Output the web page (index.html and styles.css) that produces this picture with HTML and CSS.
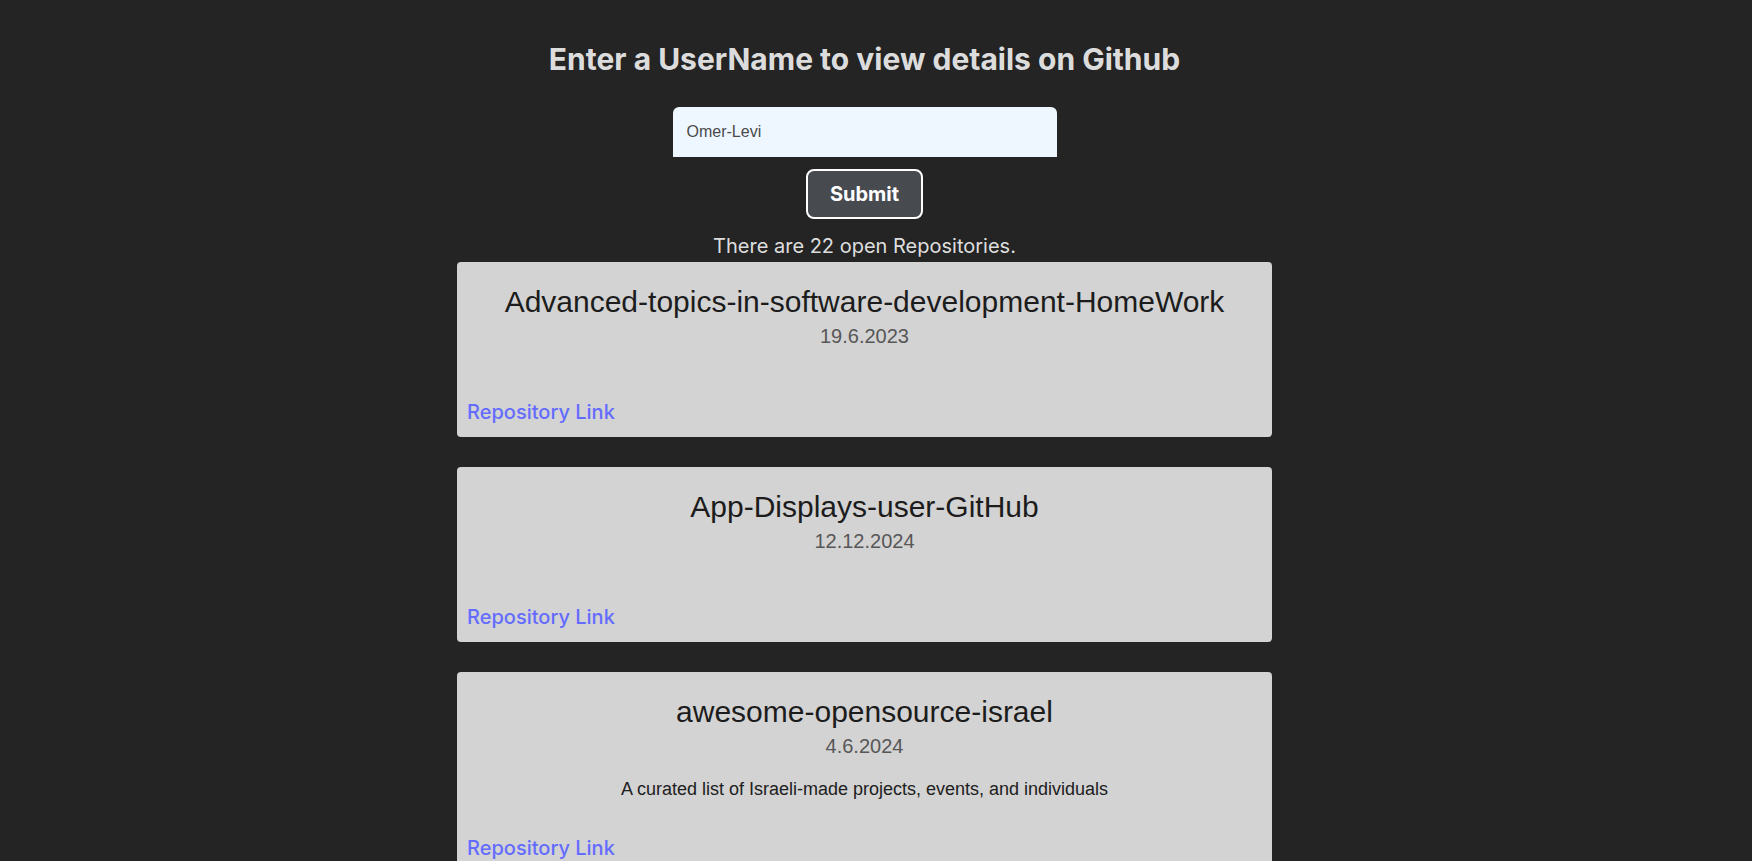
FILE: index.html
```html
<!DOCTYPE html>
<html lang="en">
<head>
<meta charset="utf-8">
<title>Github User Details</title>
<link rel="stylesheet" href="styles.css">
</head>
<body>
<div class="app">
  <h1 class="title">Enter a UserName to view details on Github</h1>
  <form class="search">
    <input class="search-input" type="text" value="Omer-Levi">
    <button class="search-btn" type="button">Submit</button>
  </form>
  <p class="count">There are 22 open Repositories.</p>
  <div class="repo-list">
    <div class="repo-card">
      <h2 class="repo-name">Advanced-topics-in-software-development-HomeWork</h2>
      <p class="repo-date">19.6.2023</p>
      <p class="repo-desc"></p>
      <div class="repo-link-row"><a class="repo-link" href="#">Repository Link</a></div>
    </div>
    <div class="repo-card">
      <h2 class="repo-name">App-Displays-user-GitHub</h2>
      <p class="repo-date">12.12.2024</p>
      <p class="repo-desc"></p>
      <div class="repo-link-row"><a class="repo-link" href="#">Repository Link</a></div>
    </div>
    <div class="repo-card">
      <h2 class="repo-name">awesome-opensource-israel</h2>
      <p class="repo-date">4.6.2024</p>
      <p class="repo-desc">A curated list of Israeli-made projects, events, and individuals</p>
      <div class="repo-link-row"><a class="repo-link" href="#">Repository Link</a></div>
    </div>
  </div>
</div>
</body>
</html>
```

FILE: styles.css
```css
html, body {
  margin: 0;
  padding: 0;
  background: #242424;
}

body {
  padding-right: 23px;
  font-family: Inter, "Noto Sans", sans-serif;
  color: rgba(255, 255, 255, 0.87);
}

.app {
  display: flex;
  flex-direction: column;
  align-items: center;
  padding-top: 41px;
}

.title {
  margin: 0;
  font-size: 30px;
  line-height: 37px;
  font-weight: 700;
  color: rgba(255, 255, 255, 0.87);
}

.search {
  display: flex;
  flex-direction: column;
  align-items: center;
  margin-top: 29px;
}

.search-input {
  box-sizing: border-box;
  width: 384px;
  height: 50px;
  margin: 0;
  padding: 0 14px;
  border: none;
  border-radius: 6px 6px 0 0;
  background: #eef7ff;
  font-family: "Liberation Sans", Arial, sans-serif;
  font-size: 16px;
  color: #4a4a4a;
  outline: none;
}

.search-btn {
  box-sizing: border-box;
  width: 117px;
  height: 50px;
  margin-top: 12px;
  border: 2px solid #ffffff;
  border-radius: 8px;
  background: #474b50;
  color: #ffffff;
  font-family: Inter, "Noto Sans", sans-serif;
  font-size: 20px;
  font-weight: 700;
  cursor: pointer;
}

.count {
  margin: 16px 0 0;
  font-size: 20px;
  line-height: 22px;
}

.repo-list {
  display: flex;
  flex-direction: column;
  gap: 30px;
  width: 815px;
  margin-top: 5px;
}

.repo-card {
  display: flex;
  flex-direction: column;
  padding: 22px 10px 13px;
  background: #d3d3d3;
  border-radius: 4px;
  font-family: "Liberation Sans", Arial, sans-serif;
}

.repo-name {
  margin: 0;
  font-size: 30px;
  line-height: 36px;
  font-weight: 400;
  text-align: center;
  color: #1c1c1c;
}

.repo-date {
  margin: 4px 0 0;
  font-size: 20px;
  line-height: 24px;
  text-align: center;
  color: #575757;
}

.repo-desc {
  margin: 20px 0 36px;
  font-size: 18px;
  line-height: 22px;
  text-align: center;
  color: #202020;
}

.repo-desc:empty {
  margin: 19px 0 33px;
}

.repo-link-row {
  font-family: Inter, "Noto Sans", sans-serif;
  font-size: 20px;
  line-height: 24px;
}

.repo-link {
  font-weight: 500;
  color: #646cff;
  text-decoration: none;
}
```
